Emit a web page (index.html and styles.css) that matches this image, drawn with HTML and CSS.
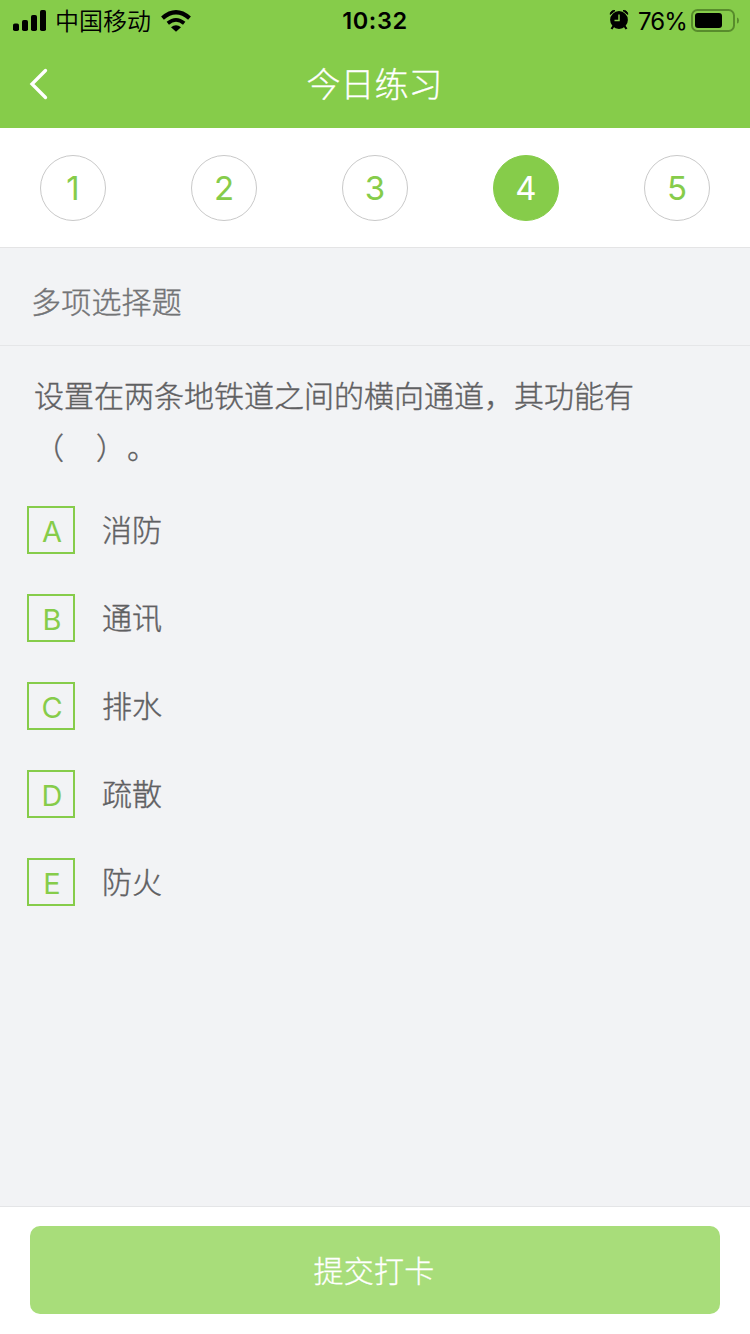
FILE: index.html
```html
<!DOCTYPE html>
<html lang="zh-CN">
<head>
<meta charset="utf-8">
<title>今日练习</title>
<link rel="stylesheet" href="styles.css">
</head>
<body>
<div class="app">
  <header class="header">
    <div class="status">
      <div class="status-left">
        <svg class="signal" width="34" height="22" viewBox="0 0 34 22">
          <rect x="0" y="13.500" width="6" height="7.500" rx="1.800"/>
          <rect x="9" y="10" width="6" height="11" rx="1.800"/>
          <rect x="18" y="5" width="6" height="16" rx="1.800"/>
          <rect x="27" y="0" width="6" height="21" rx="1.800"/>
        </svg>
        <span class="carrier">中国移动</span>
        <svg class="wifi" width="30" height="22" viewBox="0 0 30 22">
          <path d="M1.500 8.100Q15-3.600 28.500 8.100" fill="none" stroke="#000" stroke-width="4.200"/>
          <path d="M6.800 13.300Q15 6.600 23.200 13.300" fill="none" stroke="#000" stroke-width="3.700"/>
          <path d="M10 17.200Q15 13.300 20 17.200L15 21.700Z"/>
        </svg>
      </div>
      <span class="clock">10:32</span>
      <div class="status-right">
        <svg class="alarm" width="20" height="22" viewBox="0 0 20 22">
          <path d="M4.500 17L2.500 20M15.500 17L17.500 20" stroke="#000" stroke-width="2.200"/>
          <path d="M1.200 5.400A3.800 3.800 0 0 1 6 1.600ZM18.800 5.400A3.800 3.800 0 0 0 14 1.600Z" stroke="#000" stroke-width="1"/>
          <circle cx="10" cy="11" r="8.900"/>
          <path d="M10 5.500v6H5.500" fill="none" stroke="#86cc4a" stroke-width="1.500"/>
        </svg>
        <span class="percent">76%</span>
        <svg class="battery" width="49" height="24" viewBox="0 0 49 24">
          <rect x="1" y="1" width="42" height="21" rx="5.500" fill="none" stroke="#588c2c" stroke-width="2"/>
          <rect x="4" y="4" width="27" height="15" rx="3"/>
          <path d="M46 8.500Q48 9 48 11.500T46 14.500Z" fill="#588c2c"/>
        </svg>
      </div>
    </div>
    <div class="navbar">
      <svg class="back" width="20" height="32" viewBox="0 0 20 32"><path d="M17.500 2.500L4 16L17.500 29.500" fill="none" stroke="#fff" stroke-width="3.300" stroke-linecap="round"/></svg>
      <h1 class="title">今日练习</h1>
    </div>
  </header>
  <nav class="steps">
    <span class="step">1</span>
    <span class="step">2</span>
    <span class="step">3</span>
    <span class="step active">4</span>
    <span class="step">5</span>
  </nav>
  <main class="content">
    <h2 class="kind">多项选择题</h2>
    <p class="question">设置在两条地铁道之间的横向通道，其功能有<br><span class="blank"><span>（</span><span>）</span><span>。</span></span></p>
    <ul class="options">
      <li class="option"><span class="box">A</span><span>消防</span></li>
      <li class="option"><span class="box">B</span><span>通讯</span></li>
      <li class="option"><span class="box">C</span><span>排水</span></li>
      <li class="option"><span class="box">D</span><span>疏散</span></li>
      <li class="option"><span class="box">E</span><span>防火</span></li>
    </ul>
  </main>
  <footer class="footer"><button class="submit">提交打卡</button></footer>
</div>
</body>
</html>
```
FILE: styles.css
```css
* { box-sizing: border-box; margin: 0; padding: 0; }
body { font-family: Inter, "Noto Sans CJK SC", sans-serif; color: #5f6062; }
.app { width: 750px; height: 1334px; display: flex; flex-direction: column; background: #f2f3f5; }
.header { height: 128px; background: #86cc4a; }
.status { height: 40px; display: grid; grid-template-columns: 1fr auto 1fr; align-items: center; color: #000; }
.status-left, .status-right { display: flex; align-items: center; }
.status-left { padding-left: 13px; }
.status-right { justify-content: flex-end; padding-right: 10px; }
.carrier { margin: 2px 0 0 8px; font-size: 24px; font-weight: 350; line-height: 40px; }
.wifi { margin-left: 10px; }
.clock { font-size: 23.5px; font-weight: 600; line-height: 40px; letter-spacing: 0.6px; }
.alarm { margin-bottom: 2px; }
.percent { margin: 1px 4px 0 9px; font-size: 24px; font-weight: 400; line-height: 40px; letter-spacing: -0.9px; }
.navbar { height: 88px; padding: 0 28px; display: grid; grid-template-columns: 40px 1fr 40px; align-items: center; }
.title { padding: 2px 1px 0 0; text-align: center; font-size: 34px; font-weight: 300; line-height: 48px; color: #fff; -webkit-text-stroke: 0.3px #fff; }
.steps { height: 120px; padding: 0 40px; display: flex; align-items: center; justify-content: space-between; background: #fff; border-bottom: 1px solid #e4e4e5; }
.step { width: 66px; height: 66px; padding-top: 1px; display: flex; align-items: center; justify-content: center; border: 1px solid #c9c9c9; border-radius: 50%; font-size: 33px; color: #86cc4a; }
.step.active { background: #86cc4a; border-color: #86cc4a; color: #fff; }
.content { flex: 1; }
.kind { height: 98px; padding: 6px 31px 0; display: flex; align-items: center; border-bottom: 1px solid #e5e6e8; font-size: 30px; font-weight: 300; letter-spacing: 0.2px; color: #737476; -webkit-text-stroke: 0.4px #737476; }
.question { padding: 24px 34px 0; font-size: 30px; font-weight: 300; line-height: 52px; -webkit-text-stroke: 0.4px #5f6062; }
.blank { display: flex; }
.blank span:nth-child(2) { margin-left: 32px; }
.blank span:nth-child(3) { margin-left: 1px; }
.options { margin-top: 32px; padding-left: 27px; display: grid; gap: 40px; list-style: none; }
.option { height: 48px; display: flex; align-items: center; gap: 27px; font-size: 30px; font-weight: 300; line-height: 48px; -webkit-text-stroke: 0.4px #5f6062; }
.box { width: 48px; height: 48px; padding: 3px 0 0 2px; display: flex; align-items: center; justify-content: center; border: 2px solid #86cc4a; font-size: 29px; font-weight: 400; color: #86cc4a; -webkit-text-stroke: 0; }
.footer { height: 128px; padding: 19px 30px 0; background: #fff; border-top: 1px solid #e4e5e7; }
.submit { width: 690px; height: 88px; padding: 0 2px 2px 0; display: block; border: 0; border-radius: 10px; background: #a8dd7a; color: #fff; font-family: inherit; font-size: 30px; font-weight: 300; letter-spacing: 0.2px; -webkit-text-stroke: 0.3px #fff; }
```
